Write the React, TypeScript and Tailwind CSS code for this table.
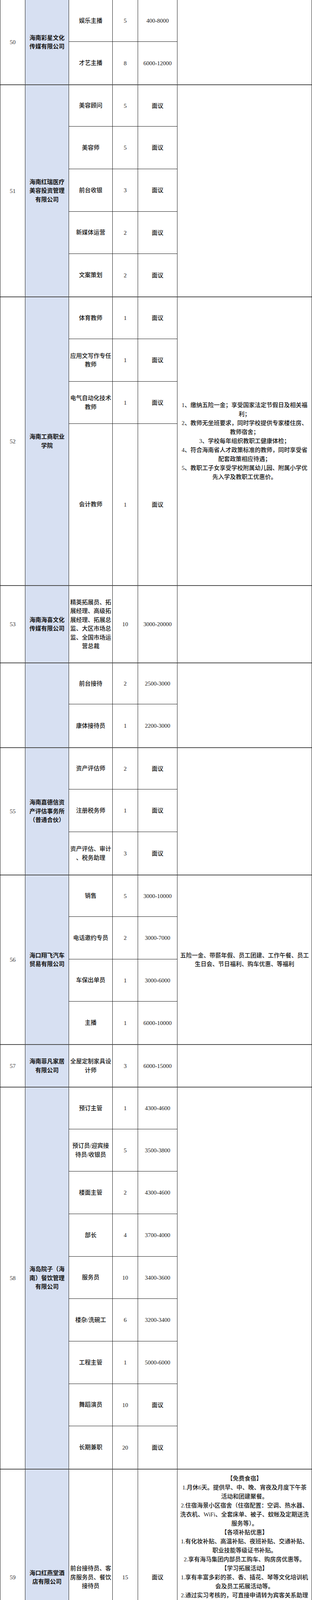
import React from "react";

type Job = { h: string; name: string[]; n: string; pay: string };
type Row = {
  num: string;
  company: string[];
  jobs: Job[];
  benefits: string[];
  lead: string;
  top: boolean;
};

const rows: Row[] = [
  {
    num: "50",
    company: ["海南彩星文化", "传媒有限公司"],
    jobs: [
      { h: "h-[107px]", name: ["娱乐主播"], n: "5", pay: "400-8000" },
      { h: "h-[109px]", name: ["才艺主播"], n: "8", pay: "6000-12000" },
    ],
    benefits: [],
    lead: "h-[23px] leading-[23px]",
    top: false,
  },
  {
    num: "51",
    company: ["海南红瑞医疗", "美容投资管理", "有限公司"],
    jobs: [
      { h: "h-[106px]", name: ["美容顾问"], n: "5", pay: "面议" },
      { h: "h-[109px]", name: ["美容师"], n: "5", pay: "面议" },
      { h: "h-[109px]", name: ["前台收银"], n: "3", pay: "面议" },
      { h: "h-[108px]", name: ["新媒体运营"], n: "2", pay: "面议" },
      { h: "h-[109px]", name: ["文案策划"], n: "2", pay: "面议" },
    ],
    benefits: [],
    lead: "h-[23px] leading-[23px]",
    top: true,
  },
  {
    num: "52",
    company: ["海南工商职业", "学院"],
    jobs: [
      { h: "h-[107px]", name: ["体育教师"], n: "1", pay: "面议" },
      { h: "h-[109px]", name: ["应用文写作专任", "教师"], n: "1", pay: "面议" },
      { h: "h-[108px]", name: ["电气自动化技术", "教师"], n: "1", pay: "面议" },
      { h: "h-[413px]", name: ["会计教师"], n: "1", pay: "面议" },
    ],
    benefits: [
      "1、缴纳五险一金；享受国家法定节假日及相关福",
      "利；",
      "2、教师无坐班要求，同时学校提供专家楼住房、",
      "教师宿舍；",
      "3、学校每年组织教职工健康体检；",
      "4、符合海南省人才政策标准的教师，同时享受省",
      "配套政策相应待遇；",
      "5、教职工子女享受学校附属幼儿园、附属小学优",
      "先入学及教职工优惠价。",
    ],
    lead: "h-[23px] leading-[23px]",
    top: true,
  },
  {
    num: "53",
    company: ["海南海喜文化", "传媒有限公司"],
    jobs: [
      {
        h: "h-[196px]",
        name: [
          "精英拓展员、拓",
          "展经理、高级拓",
          "展经理、拓展总",
          "监、大区市场总",
          "监、全国市场运",
          "营总裁",
        ],
        n: "10",
        pay: "3000-20000",
      },
    ],
    benefits: [],
    lead: "h-[23px] leading-[23px]",
    top: true,
  },
  {
    num: "",
    company: [],
    jobs: [
      { h: "h-[105px]", name: ["前台接待"], n: "2", pay: "2500-3000" },
      { h: "h-[110px]", name: ["康体接待员"], n: "1", pay: "2200-3000" },
    ],
    benefits: [],
    lead: "h-[23px] leading-[23px]",
    top: true,
  },
  {
    num: "55",
    company: ["海南嘉德信资", "产评估事务所", "（普通合伙）"],
    jobs: [
      { h: "h-[106px]", name: ["资产评估师"], n: "2", pay: "面议" },
      { h: "h-[109px]", name: ["注册税务师"], n: "1", pay: "面议" },
      { h: "h-[109px]", name: ["资产评估、审计", "、税务助理"], n: "3", pay: "面议" },
    ],
    benefits: [],
    lead: "h-[23px] leading-[23px]",
    top: true,
  },
  {
    num: "56",
    company: ["海口翔飞汽车", "贸易有限公司"],
    jobs: [
      { h: "h-[106px]", name: ["销售"], n: "5", pay: "3000-10000" },
      { h: "h-[109px]", name: ["电话邀约专员"], n: "2", pay: "3000-7000" },
      { h: "h-[108px]", name: ["车保出单员"], n: "1", pay: "3000-6000" },
      { h: "h-[109px]", name: ["主播"], n: "1", pay: "6000-10000" },
    ],
    benefits: [
      "五险一金、带薪年假、员工团建、工作午餐、员工",
      "生日会、节日福利、购车优惠、等福利",
    ],
    lead: "h-[22px] leading-[22px]",
    top: true,
  },
  {
    num: "57",
    company: ["海南菲凡家居", "有限公司"],
    jobs: [
      { h: "h-[107px]", name: ["全屋定制家具设", "计师"], n: "3", pay: "6000-15000" },
    ],
    benefits: [],
    lead: "h-[23px] leading-[23px]",
    top: true,
  },
  {
    num: "58",
    company: ["海岛院子（海", "南）餐饮管理", "有限公司"],
    jobs: [
      { h: "h-[107px]", name: ["预订主管"], n: "1", pay: "4300-4600" },
      { h: "h-[108px]", name: ["预订员/迎宾接", "待员/收银员"], n: "5", pay: "3500-3800" },
      { h: "h-[109px]", name: ["楼面主管"], n: "2", pay: "4300-4600" },
      { h: "h-[109px]", name: ["部长"], n: "4", pay: "3700-4000" },
      { h: "h-[108px]", name: ["服务员"], n: "10", pay: "3400-3600" },
      { h: "h-[109px]", name: ["楼杂/洗碗工"], n: "6", pay: "3200-3400" },
      { h: "h-[109px]", name: ["工程主管"], n: "1", pay: "5000-6000" },
      { h: "h-[108px]", name: ["舞蹈演员"], n: "10", pay: "面议" },
      { h: "h-[109px]", name: ["长期兼职"], n: "20", pay: "面议" },
    ],
    benefits: [],
    lead: "h-[23px] leading-[23px]",
    top: true,
  },
  {
    num: "59",
    company: ["海口红燕堂酒", "店有限公司"],
    jobs: [
      {
        h: "h-[552px]",
        name: ["前台接待员、客", "房服务员、餐饮", "接待员"],
        n: "15",
        pay: "面议",
      },
    ],
    benefits: [
      "【免费食宿】",
      "1.月休6天。提供早、中、晚、宵夜及月度下午茶",
      "活动和团建聚餐。",
      "2.住宿海景小区宿舍（住宿配置：空调、热水器、",
      "洗衣机、WiFi、全套床单、被子、蚊帐及定期送洗",
      "服务等）。",
      "【各项补贴优惠】",
      "1.有化妆补贴、高温补贴、夜班补贴、交通补贴、",
      "职业技能等级证书补贴。",
      "2.享有海马集团内部员工购车、购房房优惠等。",
      "【学习拓展活动】",
      "1.享有丰富多彩的茶、香、插花、琴等文化培训机",
      "会及员工拓展活动等。",
      "2.通过实习考核的，可直接申请转为宾客关系助理",
      "或管理培训生。",
      "3.可参加酒店“旺工淡学”升学项目（升大专或本",
      "科）。",
      "【奖励机制】",
      "宾客表扬奖励员工行为奖励、员工贡献奖励、员",
      "工荣誉奖励、月绩效奖金、年末奖金、实习结业优",
      "秀奖金。",
      "【温暖福利】",
      "家庭贫困补助金、众筹捐赠金、慰问礼等。",
    ],
    lead: "h-[23px] leading-[23px]",
    top: true,
  },
];

function Lines({ lines, lh }: { lines: string[]; lh: string }) {
  return (
    <div className="flex flex-col items-center">
      {lines.map((l, i) => (
        <div key={i} className={"whitespace-nowrap " + lh}>
          {l}
        </div>
      ))}
    </div>
  );
}

export default function App() {
  return (
    <div className="w-[800px] h-[4314px] overflow-hidden bg-white text-[15px] font-medium text-[#141414] font-['Liberation_Serif','Noto_Sans_CJK_SC',serif]">
      <div className="border-l border-r border-[#1a1a1a] flex flex-col">
        {rows.map((r, ri) => (
          <div
            key={ri}
            className={"flex " + (r.top ? "border-t-2 border-[#4a4a4a]" : "")}
          >
            <div className="w-[64px] shrink-0 border-r border-[#1a1a1a] flex items-center justify-center font-normal text-[#333]">
              <div className="h-[22px] leading-[22px]">{r.num}</div>
            </div>
            <div className="w-[112px] shrink-0 border-r border-[#1a1a1a] bg-[#d7e0f2] flex items-center justify-center font-bold">
              {r.company.length > 0 && (
                <Lines lines={r.company} lh="h-[22.5px] leading-[22.5px]" />
              )}
            </div>
            <div className="w-[278px] shrink-0 flex flex-col">
              {r.jobs.map((j, ji) => (
                <div
                  key={ji}
                  className={
                    "flex shrink-0 " +
                    j.h +
                    (ji < r.jobs.length - 1 ? " border-b border-[#1a1a1a]" : "")
                  }
                >
                  <div className="w-[112px] shrink-0 border-r border-[#1a1a1a] flex items-center justify-center">
                    <Lines lines={j.name} lh="h-[22.5px] leading-[22.5px]" />
                  </div>
                  <div className="w-[65px] shrink-0 border-r border-[#1a1a1a] flex items-center justify-center">
                    <div className="h-[22px] leading-[22px]">{j.n}</div>
                  </div>
                  <div className="w-[101px] shrink-0 border-r border-[#1a1a1a] flex items-center justify-center">
                    <div className="h-[22px] leading-[22px]">{j.pay}</div>
                  </div>
                </div>
              ))}
            </div>
            <div className="flex-1 min-w-0 flex items-center justify-center">
              {r.benefits.length > 0 && <Lines lines={r.benefits} lh={r.lead} />}
            </div>
          </div>
        ))}
      </div>
    </div>
  );
}
